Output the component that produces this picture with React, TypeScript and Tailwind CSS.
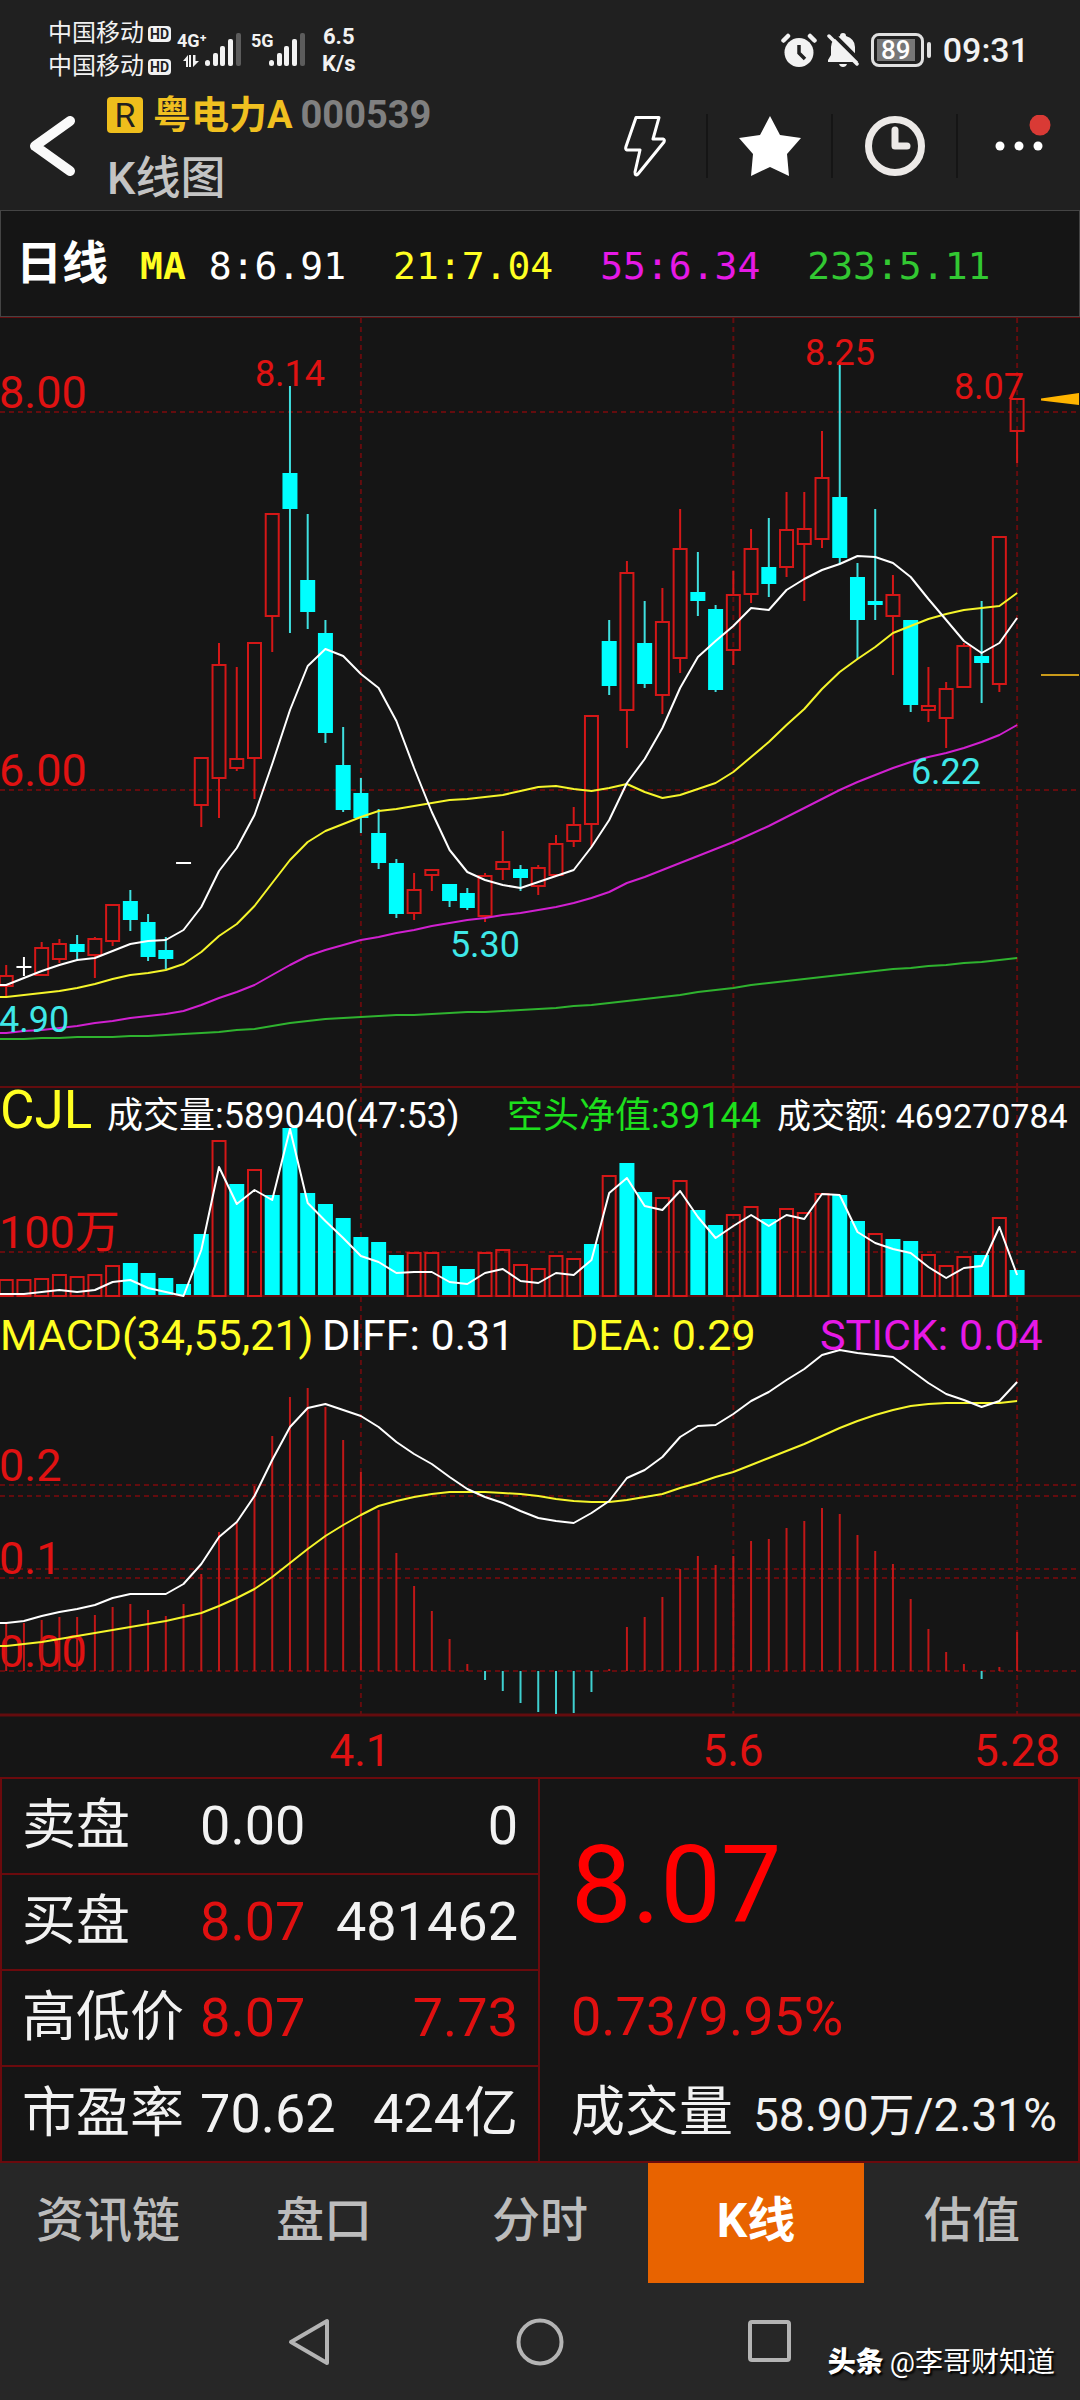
import React from 'react';

type Candle = [kind: 'up' | 'down' | 'flat', high: number, top: number, bottom: number, low: number];

// One entry per trading day, all values are on the chart's own vertical scale
const CANDLES: Candle[] = [
  ['up', 965, 976, 986, 997], ['flat', 957, 967, 967, 976], ['up', 942, 948, 975, 976], ['up', 939, 944, 959, 963],
  ['down', 935, 944, 952, 959], ['up', 937, 939, 955, 978], ['up', 905, 905, 941, 946], ['down', 890, 901, 920, 931],
  ['down', 914, 922, 957, 961], ['down', 937, 950, 959, 969], ['flat', 863, 863, 863, 863], ['up', 758, 758, 805, 827],
  ['up', 643, 665, 778, 818], ['up', 667, 759, 768, 771], ['up', 643, 643, 758, 799], ['up', 514, 514, 616, 652],
  ['down', 386, 473, 509, 633], ['down', 514, 580, 612, 629], ['down', 620, 633, 733, 743], ['down', 727, 765, 810, 812],
  ['down', 778, 793, 818, 833], ['down', 809, 833, 863, 869], ['down', 859, 863, 914, 918], ['up', 873, 890, 913, 920],
  ['up', 870, 870, 875, 891], ['down', 884, 884, 901, 907], ['down', 888, 893, 908, 910], ['up', 873, 876, 916, 922],
  ['up', 831, 862, 869, 880], ['down', 865, 869, 878, 891], ['up', 865, 868, 886, 895], ['up', 835, 844, 875, 875],
  ['up', 807, 825, 841, 847], ['up', 716, 716, 824, 847], ['down', 620, 641, 686, 695], ['up', 561, 573, 710, 748],
  ['down', 601, 643, 684, 688], ['up', 588, 622, 695, 714], ['up', 509, 549, 658, 673], ['down', 552, 592, 601, 616],
  ['down', 605, 609, 690, 692], ['up', 571, 595, 650, 665], ['up', 529, 549, 594, 603], ['down', 518, 567, 584, 597],
  ['up', 492, 530, 567, 577], ['up', 492, 529, 544, 601], ['up', 431, 478, 539, 548], ['down', 365, 497, 558, 564],
  ['down', 563, 577, 620, 659], ['down', 509, 601, 605, 620], ['up', 575, 595, 616, 675], ['down', 620, 620, 705, 712],
  ['up', 667, 706, 710, 722], ['up', 682, 689, 718, 748], ['up', 643, 646, 687, 688], ['down', 601, 656, 663, 703],
  ['up', 537, 537, 684, 692], ['up', 399, 399, 431, 463],
];

const MA8 = [
  985, 978, 971, 965, 960, 958, 951, 944, 941, 940, 930, 907, 871, 848, 815, 764, 710, 666, 649, 656,
  674, 688, 721, 768, 812, 850, 872, 880, 885, 888, 882, 876, 870, 847, 820, 783, 759, 728, 688, 657,
  641, 626, 608, 610, 590, 579, 570, 564, 556, 557, 563, 577, 599, 620, 641, 653, 643, 618,
];

const MA21 = [
  997, 995, 993, 991, 988, 984, 979, 975, 973, 970, 964, 952, 936, 924, 906, 883, 860, 842, 831, 824,
  817, 811, 809, 806, 803, 800, 799, 797, 795, 791, 787, 786, 789, 791, 788, 784, 792, 798, 795, 789,
  783, 772, 757, 742, 725, 709, 689, 672, 659, 647, 633, 626, 619, 614, 610, 608, 606, 593,
];

const MA55 = [
  1033, 1031, 1030, 1028, 1026, 1023, 1021, 1018, 1016, 1014, 1011, 1005, 998, 992, 985, 975, 965, 956, 950, 945,
  940, 937, 933, 930, 926, 923, 920, 918, 915, 913, 910, 907, 903, 898, 892, 883, 877, 870, 863, 856,
  849, 842, 834, 826, 817, 808, 799, 790, 782, 775, 768, 762, 757, 753, 748, 742, 735, 725,
];

const MA233 = [
  1039, 1039, 1038, 1038, 1037, 1037, 1037, 1036, 1036, 1035, 1034, 1033, 1032, 1030, 1029, 1026, 1023, 1021, 1019, 1018,
  1017, 1016, 1015, 1015, 1014, 1013, 1012, 1012, 1011, 1010, 1009, 1008, 1006, 1005, 1003, 1001, 999, 997, 995, 992,
  990, 988, 985, 983, 981, 979, 977, 975, 973, 971, 969, 968, 966, 965, 963, 962, 960, 958,
];

const VOLUMES = [
  1280, 1280, 1279, 1275, 1277, 1275, 1266, 1263, 1273, 1278, 1284, 1234, 1141, 1184, 1170, 1195, 1128, 1193, 1204, 1218,
  1237, 1242, 1255, 1253, 1253, 1266, 1269, 1253, 1250, 1265, 1269, 1256, 1259, 1244, 1176, 1163, 1192, 1198, 1181, 1210,
  1225, 1215, 1207, 1219, 1209, 1213, 1194, 1195, 1221, 1234, 1239, 1241, 1255, 1266, 1257, 1255, 1218, 1270,
];

const SOLID_DAYS = [
  7, 8, 9, 10, 11, 13, 15, 16, 17, 18, 19, 20, 21, 22, 25, 26, 33, 35, 36, 39, 40, 43, 47, 48, 50, 51, 55, 57,
];

const VOLUME_LINE = [
  1294, 1294, 1292, 1290, 1292, 1290, 1282, 1280, 1288, 1292, 1296, 1250, 1167, 1204, 1190, 1200, 1129, 1203, 1221, 1238,
  1256, 1262, 1273, 1272, 1272, 1282, 1284, 1273, 1269, 1281, 1283, 1273, 1275, 1260, 1193, 1178, 1206, 1210, 1191, 1217,
  1238, 1226, 1215, 1226, 1215, 1219, 1194, 1195, 1232, 1243, 1249, 1253, 1267, 1278, 1268, 1266, 1227, 1275,
];

const STICKS = [
  1623, 1623, 1620, 1617, 1617, 1615, 1607, 1604, 1610, 1616, 1604, 1574, 1532, 1523, 1486, 1436, 1397, 1388, 1407, 1440,
  1472, 1510, 1553, 1586, 1611, 1639, 1664, 1680, 1691, 1703, 1712, 1714, 1713, 1692, 1669, 1627, 1617, 1597, 1569, 1556,
  1565, 1556, 1541, 1539, 1528, 1521, 1508, 1514, 1535, 1551, 1564, 1599, 1629, 1652, 1664, 1679, 1667, 1632,
];

const DIFF = [
  1623, 1621, 1616, 1612, 1609, 1605, 1598, 1594, 1594, 1594, 1584, 1564, 1537, 1522, 1496, 1460, 1427, 1408, 1404, 1410,
  1416, 1427, 1442, 1454, 1464, 1477, 1489, 1497, 1503, 1511, 1518, 1521, 1523, 1513, 1501, 1478, 1470, 1457, 1437, 1426,
  1425, 1414, 1401, 1392, 1380, 1369, 1355, 1350, 1353, 1355, 1357, 1370, 1383, 1394, 1400, 1407, 1401, 1382,
];

const DEA = [
  1646, 1644, 1642, 1639, 1636, 1633, 1630, 1627, 1624, 1621, 1617, 1613, 1606, 1598, 1589, 1577, 1563, 1549, 1536, 1525,
  1515, 1506, 1501, 1497, 1494, 1492, 1492, 1492, 1493, 1494, 1496, 1499, 1501, 1502, 1502, 1500, 1497, 1494, 1488, 1483,
  1477, 1472, 1465, 1458, 1451, 1444, 1436, 1428, 1421, 1415, 1410, 1406, 1404, 1403, 1403, 1403, 1403, 1401,
];

const ZERO = 1671;
const RED = '#d41717';
const LABEL_RED = '#e01212';
const GRID = '#640c0e';
const TABS = ['资讯链', '盘口', '分时', 'K线', '估值'];

const dayX = (i: number) => 6.2 + i * 17.735;

const points = (values: number[]) =>
  [`0,${values[0]}`, ...values.map((y, i) => `${dayX(i).toFixed(1)},${y}`)].join(' ');

const Line: React.FC<{ values: number[]; color: string }> = ({ values, color }) => (
  <polyline points={points(values)} fill="none" stroke={color} strokeWidth="2" strokeLinejoin="round" />
);

const Grid: React.FC<{ top: number; bottom: number; rows: number[] }> = ({ top, bottom, rows }) => (
  <g stroke={GRID} strokeWidth="2" strokeDasharray="5 4">
    {[20, 41, 57].map((day) => (
      <line key={day} x1={dayX(day)} x2={dayX(day)} y1={top} y2={bottom} />
    ))}
    {rows.map((y) => (
      <line key={y} x1="0" x2="1080" y1={y} y2={y} />
    ))}
  </g>
);

const CandleShape: React.FC<{ candle: Candle; x: number }> = ({ candle, x }) => {
  const [kind, high, top, bottom, low] = candle;

  if (kind === 'flat') {
    return (
      <g stroke="#fff" strokeWidth="2">
        <line x1={x - 7.5} x2={x + 7.5} y1={top} y2={top} />
        <line x1={x} x2={x} y1={high} y2={low} />
      </g>
    );
  }

  if (kind === 'down') {
    return (
      <g>
        <line x1={x} x2={x} y1={high} y2={low} stroke="#3fe0e0" strokeWidth="2" />
        <rect x={x - 7.5} y={top} width="15" height={bottom - top} fill="#00ffff" />
      </g>
    );
  }

  return (
    <g stroke={RED} strokeWidth="2">
      <line x1={x} x2={x} y1={high} y2={top} />
      <line x1={x} x2={x} y1={bottom} y2={low} />
      <rect x={x - 6.5} y={top} width="13" height={bottom - top} fill="none" />
    </g>
  );
};

const PriceChart: React.FC = () => (
  <svg viewBox="0 318 1080 768" className="block w-full h-auto">
    <Grid top={318} bottom={1086} rows={[412, 790]} />
    <g fill={LABEL_RED} fontSize="45">
      <text x="-1" y="408">8.00</text>
      <text x="-1" y="786">6.00</text>
    </g>
    {CANDLES.map((candle, i) => (
      <CandleShape key={i} candle={candle} x={dayX(i)} />
    ))}
    <Line values={MA233} color="#2fb32f" />
    <Line values={MA55} color="#d020d0" />
    <Line values={MA21} color="#f5f52a" />
    <Line values={MA8} color="#fff" />
    <g fill={LABEL_RED} fontSize="36" textAnchor="middle">
      <text x="290" y="386">8.14</text>
      <text x="840" y="365">8.25</text>
      <text x="989" y="399">8.07</text>
    </g>
    <g fill="#3fe8e8" fontSize="36">
      <text x="-1" y="1032">4.90</text>
      <text x="485" y="957" textAnchor="middle">5.30</text>
      <text x="946" y="784" textAnchor="middle">6.22</text>
    </g>
    {/* Price markers on the right edge */}
    <path d="M1041 398.5 L1079 393 V405 L1041 400.5 Z" fill="#ffb400" />
    <line x1="1041" x2="1079" y1="675" y2="675" stroke="#c99a1a" strokeWidth="2" />
  </svg>
);

const VolumeChart: React.FC = () => (
  <div className="relative border-t-2 border-[#640c0e]">
    <svg viewBox="0 1088 1080 209" className="block w-full h-auto">
      <Grid top={1088} bottom={1297} rows={[1252]} />
      <line x1="0" x2="1080" y1="1296" y2="1296" stroke={GRID} strokeWidth="2" />
      <text x="-1" y="1248" fill={LABEL_RED} fontSize="45">100万</text>
      {VOLUMES.map((top, i) =>
        SOLID_DAYS.includes(i) ? (
          <rect key={i} x={dayX(i) - 7.5} y={top} width="15" height={1295 - top} fill="#00ffff" />
        ) : (
          <rect key={i} x={dayX(i) - 6.5} y={top} width="13" height={1296 - top} fill="none" stroke={RED} strokeWidth="2" />
        )
      )}
      <Line values={VOLUME_LINE} color="#fff" />
    </svg>
    <div className="absolute inset-x-0 top-0 flex items-baseline text-[36px] leading-[44px] whitespace-nowrap text-white">
      <span className="w-[107px] text-[53px] text-[#ffff22]">CJL</span>
      <span className="w-[400px]">成交量:589040(47:53)</span>
      <span className="w-[270px] text-[#1de01d]">空头净值:39144</span>
      <span className="text-[34px]">成交额: 469270784</span>
    </div>
  </div>
);

const MacdChart: React.FC = () => (
  <div className="relative">
    <svg viewBox="0 1297 1080 420" className="block w-full h-auto">
      <Grid top={1297} bottom={1715} rows={[1485, 1496, 1569, 1578, ZERO]} />
      <line x1="0" x2="1080" y1="1715" y2="1715" stroke={GRID} strokeWidth="3" />
      <g fill={LABEL_RED} fontSize="45">
        <text x="-1" y="1481">0.2</text>
        <text x="-1" y="1574">0.1</text>
        <text x="-1" y="1667">0.00</text>
      </g>
      {STICKS.map((y, i) => (
        <line key={i} x1={dayX(i)} x2={dayX(i)} y1={y} y2={ZERO} stroke={y < ZERO ? '#c01717' : '#3fd0d0'} strokeWidth="2" />
      ))}
      <Line values={DEA} color="#f5f52a" />
      <Line values={DIFF} color="#fff" />
    </svg>
    <div className="absolute inset-x-0 top-2 flex text-[43px] leading-[60px] whitespace-nowrap">
      <span className="w-[322px] text-[#ffff22]">MACD(34,55,21)</span>
      <span className="w-[248px] text-white">DIFF: 0.31</span>
      <span className="w-[250px] text-[#ffff22]">DEA: 0.29</span>
      <span className="text-[#e619e6]">STICK: 0.04</span>
    </div>
  </div>
);

const SignalBars: React.FC = () => (
  <svg viewBox="0 0 36 34" className="w-9 h-[34px]" fill="#f2f2f2">
    <rect x="0" y="27" width="5" height="6" rx="2.5" />
    <rect x="8" y="20" width="5" height="13" rx="2" />
    <rect x="15" y="13" width="5" height="20" rx="2" />
    <rect x="23" y="6" width="5" height="27" rx="2" />
    <rect x="31" y="0" width="5" height="33" rx="2" fill="#5c5c5c" />
  </svg>
);

const Carrier: React.FC = () => (
  <div className="flex items-center gap-1">
    <span>中国移动</span>
    <span className="w-[23px] h-4 rounded bg-[#f2f2f2] text-center text-[14px] leading-4 font-bold text-[#202020]">HD</span>
  </div>
);

const StatusBar: React.FC = () => (
  <div className="flex items-center justify-between h-20 pt-5 pl-12 pr-[51px] text-[#f2f2f2]">
    <div className="flex items-center">
      <div className="text-[24px] leading-[33px]">
        <Carrier />
        <Carrier />
      </div>
      <div className="relative w-16 h-[34px] ml-1.5 flex justify-end">
        <span className="absolute left-0 top-0 text-[18px] leading-4 font-bold">4G⁺</span>
        <svg viewBox="0 0 16 12" className="absolute left-1.5 bottom-0 w-4 h-3" fill="#f2f2f2">
          <path d="M5 12 V0 L0 6 H3 V12 Z M6 12 V0 H8 V12 Z M10 0 V12 L16 6 H12.500 V0 Z" />
        </svg>
        <SignalBars />
      </div>
      <div className="relative w-[54px] h-[34px] ml-2.5 flex justify-end">
        <span className="absolute left-0 top-0 text-[18px] leading-4 font-bold">5G</span>
        <SignalBars />
      </div>
      <div className="ml-[17px] text-center text-[22px] leading-[27px] font-bold">
        <div>6.5</div>
        <div>K/s</div>
      </div>
    </div>
    <div className="flex items-center">
      <svg viewBox="0 0 36 34" className="w-9 h-[34px]">
        <circle cx="18" cy="19.500" r="14.500" fill="#f2f2f2" />
        <path d="M2.500 7.500 L7 3 M33.500 7.500 L29 3" stroke="#f2f2f2" strokeWidth="4.500" strokeLinecap="round" />
        <path d="M18 12 V20 L24 26" fill="none" stroke="#202020" strokeWidth="3.500" />
      </svg>
      <svg viewBox="0 0 32 34" className="w-8 h-[34px] ml-2.5">
        <path d="M13 3 Q13 0 16 0 Q19 0 19 3 Q28 6 28 14 V21 L31 27 V29 H1 V27 L4 22 V14 Q4 6 13 3 Z" fill="#f2f2f2" />
        <path d="M12 31 H20 Q19 34 16 34 Q13 34 12 31 Z" fill="#f2f2f2" />
        <path d="M4 -1 L34 29" stroke="#202020" strokeWidth="4" />
        <path d="M2 3 L30 31" stroke="#f2f2f2" strokeWidth="3.500" strokeLinecap="round" />
      </svg>
      <div className="ml-3 flex w-[53px] h-[34px] rounded-lg border-[3px] border-[#e0e0e0] p-[3px]">
        <span className="w-[38px] bg-[#777] text-center text-[26px] leading-[23px] font-medium text-white">89</span>
      </div>
      <span className="ml-[3px] w-1 h-4 rounded bg-[#e0e0e0]" />
      <span className="ml-3 text-[34px] leading-10 font-medium">09:31</span>
    </div>
  </div>
);

const TitleBar: React.FC = () => (
  <header className="flex items-center h-[130px] pt-0.5">
    <button type="button" aria-label="返回" className="w-[107px] pl-[29px]">
      <svg viewBox="0 0 46 62" className="w-[46px] h-[62px]">
        <path d="M41 6 L6 31 L41 56" fill="none" stroke="#fafafa" strokeWidth="10" strokeLinecap="round" strokeLinejoin="round" />
      </svg>
    </button>
    <div className="flex-1 pt-0.5 whitespace-nowrap">
      <div className="flex items-center h-16 text-[38px] font-bold">
        <span className="w-9 h-9 rounded bg-[#efbe1c] text-center text-[34px] leading-9 font-normal text-[#202020]">R</span>
        <h1 className="ml-2.5 text-[#f0c020]">粤电力A</h1>
        <span className="ml-2 text-[#808080]">000539</span>
      </div>
      <div className="h-16 text-[45px] leading-[64px] font-medium text-[#c4c4c4]">K线图</div>
    </div>
    <div className="flex items-center divide-x-2 divide-[#151515]">
      <button type="button" aria-label="闪电" className="flex w-[125px] h-16 items-center justify-center">
        <svg viewBox="0 0 42 62" className="w-[42px] h-[62px]">
          <path d="M12 2.500 H35 L29 24 H39 Q41 24.500 40 27 L14 59 Q11 61.500 11 57 L16 35 H3 Q1 34.500 2 31.500 Z" fill="none" stroke="#fff" strokeWidth="3" strokeLinejoin="round" />
        </svg>
      </button>
      <button type="button" aria-label="自选" className="flex w-[125px] h-16 items-center justify-center">
        <svg viewBox="0 0 62 60" className="w-[62px] h-[60px]">
          <path d="M31 0 L41 19 L62 22 L48 38 L50 60 L31 51 L12 60 L14 38 L0 22 L21 19 Z" fill="#fff" />
        </svg>
      </button>
      <button type="button" aria-label="历史" className="flex w-[125px] h-16 items-center justify-center">
        <svg viewBox="0 0 60 60" className="w-[60px] h-[60px]">
          <circle cx="30" cy="30" r="26.500" fill="none" stroke="#ece9e7" strokeWidth="7" />
          <path d="M30 14 V30 H42" fill="none" stroke="#ece9e7" strokeWidth="7" strokeLinecap="round" strokeLinejoin="round" />
        </svg>
      </button>
      <button type="button" aria-label="更多" className="flex w-[122px] h-16 items-center justify-center">
        <svg viewBox="0 0 64 62" className="w-16 h-[62px]">
          <g fill="#fff">
            <circle cx="13" cy="31" r="4.500" />
            <circle cx="32" cy="31" r="4.500" />
            <circle cx="51" cy="31" r="4.500" />
          </g>
          <circle cx="53" cy="10" r="10.500" fill="#d93a35" />
        </svg>
      </button>
    </div>
  </header>
);

const AverageBar: React.FC = () => (
  <>
    <div className="flex items-baseline h-[107px] border border-[#444] bg-[#151515] pl-[15px] font-['DejaVu_Sans_Mono','Noto_Sans_CJK_SC',monospace] text-[38px] leading-[96px] whitespace-nowrap">
      <span className="w-[124px] font-['Noto_Sans_CJK_SC',sans-serif] text-[46px] font-bold text-white">日线</span>
      <span className="font-bold text-[#ffff22]">MA</span>
      <span className="ml-[23px] text-white">8:6.91</span>
      <span className="ml-[47px] text-[#ffff22]">21:7.04</span>
      <span className="ml-[47px] text-[#e619e6]">55:6.34</span>
      <span className="ml-[47px] text-[#32c832]">233:5.11</span>
    </div>
    <div className="h-px bg-[#640c0e]" />
  </>
);

const DateAxis: React.FC = () => (
  <svg viewBox="0 1717 1080 60" className="block w-full h-auto" fill={LABEL_RED} fontSize="44" textAnchor="middle">
    <text x="360" y="1766">4.1</text>
    <text x="733" y="1766">5.6</text>
    <text x="1017" y="1766">5.28</text>
  </svg>
);

const QuoteTable: React.FC = () => (
  <table className="w-1/2 table-fixed border-2 border-[#6b0a0d] text-[54px] leading-[94px] whitespace-nowrap text-[#f2f2f2]">
    <tbody>
      <tr className="border-b-2 border-[#6b0a0d]">
        <th scope="row" className="w-[37%] pl-5 text-left font-normal">卖盘</th>
        <td className="w-1/4">0.00</td>
        <td className="pr-5 text-right">0</td>
      </tr>
      <tr className="border-b-2 border-[#6b0a0d]">
        <th scope="row" className="pl-5 text-left font-normal">买盘</th>
        <td className="text-[#e01010]">8.07</td>
        <td className="pr-5 text-right">481462</td>
      </tr>
      <tr className="border-b-2 border-[#6b0a0d]">
        <th scope="row" className="pl-5 text-left font-normal">高低价</th>
        <td className="text-[#e01010]">8.07</td>
        <td className="pr-5 text-right text-[#e01010]">7.73</td>
      </tr>
      <tr>
        <th scope="row" className="pl-5 text-left font-normal">市盈率</th>
        <td>70.62</td>
        <td className="pr-5 text-right">424亿</td>
      </tr>
    </tbody>
  </table>
);

const QuoteSummary: React.FC = () => (
  <div className="flex flex-col justify-end w-1/2 border-y-2 border-r-2 border-[#6b0a0d] pl-[31px] text-[54px] leading-[96px] whitespace-nowrap">
    <div className="text-[108px] leading-[168px] text-[#ff0000]">8.07</div>
    <div className="text-[#e01010]">0.73/9.95%</div>
    <div className="flex items-baseline gap-5 text-[#f2f2f2]">
      <span>成交量</span>
      <span className="text-[46px] leading-[80px]">58.90万/2.31%</span>
    </div>
  </div>
);

const TabBar: React.FC = () => (
  <nav className="grid grid-cols-5 text-[48px] leading-[116px] font-medium text-[#bcbcbc]">
    {TABS.map((tab) => (
      <button
        key={tab}
        type="button"
        className={tab === 'K线' ? 'bg-[#e86300] pb-1 font-bold text-white' : 'pb-1'}
      >
        {tab}
      </button>
    ))}
  </nav>
);

const SystemNav: React.FC = () => (
  <div className="relative flex h-[118px] items-center justify-center gap-[184px]">
    <button type="button" aria-label="返回">
      <svg viewBox="0 0 44 48" className="w-11 h-12">
        <path d="M39 3 V45 L3 24 Z" fill="none" stroke="#b4b4b4" strokeWidth="4" strokeLinejoin="round" />
      </svg>
    </button>
    <button type="button" aria-label="主屏幕">
      <svg viewBox="0 0 48 48" className="w-12 h-12">
        <circle cx="24" cy="24" r="21.500" fill="none" stroke="#b4b4b4" strokeWidth="4" />
      </svg>
    </button>
    <button type="button" aria-label="最近任务">
      <svg viewBox="0 0 44 44" className="w-11 h-11">
        <rect x="2" y="2" width="39" height="38" rx="2" fill="none" stroke="#b4b4b4" strokeWidth="4" />
      </svg>
    </button>
    <div className="absolute right-[25px] bottom-[18px] flex items-center gap-1.5 text-[28px] leading-10 text-white [text-shadow:2px_2px_2px_#000]">
      <span className="font-black">头条</span>
      <span>@李哥财知道</span>
    </div>
  </div>
);

const App: React.FC = () => {
  return (
    <div className="w-full bg-[#272727] font-['Roboto','Noto_Sans_CJK_SC',sans-serif]">
      <div className="bg-[#202020]">
        <StatusBar />
        <TitleBar />
        <AverageBar />
      </div>

      <main className="bg-[#151515]">
        <PriceChart />
        <VolumeChart />
        <MacdChart />
        <DateAxis />
        <section className="flex">
          <QuoteTable />
          <QuoteSummary />
        </section>
      </main>

      <TabBar />
      <SystemNav />
    </div>
  );
};

export default App;
